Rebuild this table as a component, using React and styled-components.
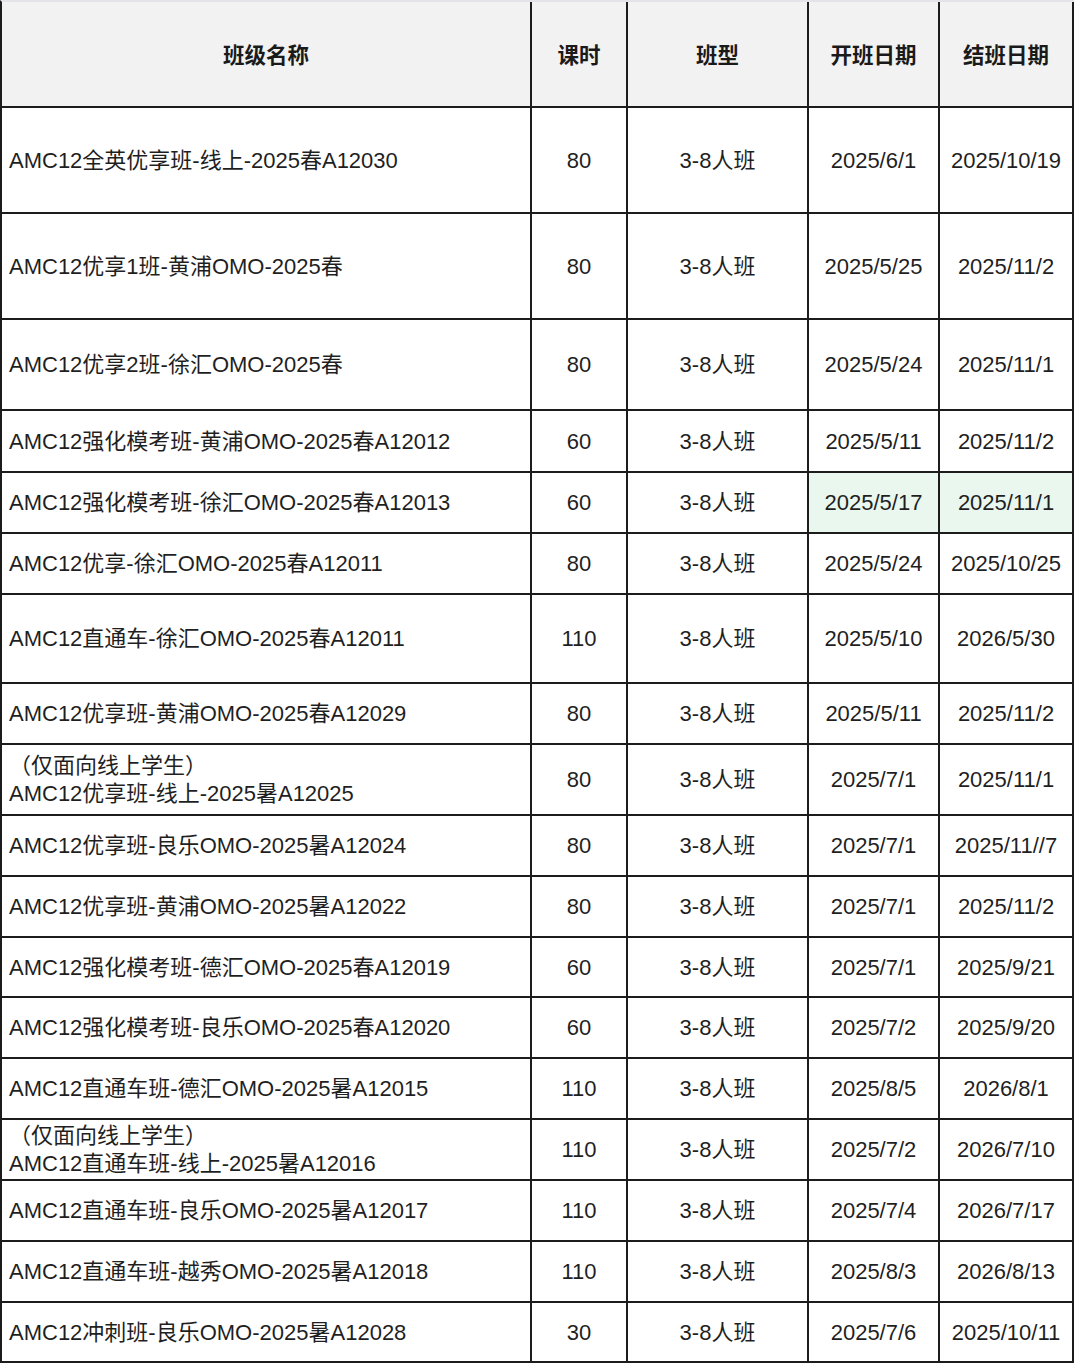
import React from "react";
import styled, { createGlobalStyle, css } from "styled-components";

const Global = createGlobalStyle`
  html, body { margin: 0; padding: 0; background: #ffffff; }
  body {
    font-family: "Liberation Sans", "Noto Sans CJK SC", sans-serif;
    color: #1f1f1f;
  }
`;

const Grid = styled.div`
  display: grid;
  grid-template-columns: 530px 96px 181px 131px 134px;
  width: 1074px;
  box-sizing: border-box;
  border-left: 2px solid #1c1c1c;
  border-top: 2px solid #e4e4e8;
`;

const Cell = styled.div`
  box-sizing: border-box;
  height: ${(p) => p.$h}px;
  border-right: 2px solid #1c1c1c;
  border-bottom: 2px solid #1c1c1c;
  display: flex;
  align-items: center;
  justify-content: ${(p) => (p.$left ? "flex-start" : "center")};
  padding-left: ${(p) => (p.$left ? "7px" : "0")};
  padding-top: 1px;
  font-size: 22px;
  line-height: 28px;
  white-space: pre-line;
  background: ${(p) => (p.$hl ? "#e9f7ee" : "#ffffff")};
  ${(p) =>
    p.$head &&
    css`
      background: #f2f2f2;
      font-weight: 700;
      font-size: 21.5px;
      padding-top: 3px;
      color: #1a1a1a;
    `}
`;

const headers = ["班级名称", "课时", "班型", "开班日期", "结班日期"];

const rows = [
  ["AMC12全英优享班-线上-2025春A12030", "80", "2025/6/1", "2025/10/19", 106],
  ["AMC12优享1班-黄浦OMO-2025春", "80", "2025/5/25", "2025/11/2", 106],
  ["AMC12优享2班-徐汇OMO-2025春", "80", "2025/5/24", "2025/11/1", 91],
  ["AMC12强化模考班-黄浦OMO-2025春A12012", "60", "2025/5/11", "2025/11/2", 62],
  ["AMC12强化模考班-徐汇OMO-2025春A12013", "60", "2025/5/17", "2025/11/1", 61, true],
  ["AMC12优享-徐汇OMO-2025春A12011", "80", "2025/5/24", "2025/10/25", 61],
  ["AMC12直通车-徐汇OMO-2025春A12011", "110", "2025/5/10", "2026/5/30", 89],
  ["AMC12优享班-黄浦OMO-2025春A12029", "80", "2025/5/11", "2025/11/2", 61],
  ["（仅面向线上学生）\nAMC12优享班-线上-2025暑A12025", "80", "2025/7/1", "2025/11/1", 71],
  ["AMC12优享班-良乐OMO-2025暑A12024", "80", "2025/7/1", "2025/11//7", 61],
  ["AMC12优享班-黄浦OMO-2025暑A12022", "80", "2025/7/1", "2025/11/2", 61],
  ["AMC12强化模考班-德汇OMO-2025春A12019", "60", "2025/7/1", "2025/9/21", 60],
  ["AMC12强化模考班-良乐OMO-2025春A12020", "60", "2025/7/2", "2025/9/20", 61],
  ["AMC12直通车班-德汇OMO-2025暑A12015", "110", "2025/8/5", "2026/8/1", 61],
  ["（仅面向线上学生）\nAMC12直通车班-线上-2025暑A12016", "110", "2025/7/2", "2026/7/10", 61],
  ["AMC12直通车班-良乐OMO-2025暑A12017", "110", "2025/7/4", "2026/7/17", 61],
  ["AMC12直通车班-越秀OMO-2025暑A12018", "110", "2025/8/3", "2026/8/13", 61],
  ["AMC12冲刺班-良乐OMO-2025暑A12028", "30", "2025/7/6", "2025/10/11", 60],
];

export default function App() {
  return (
    <>
      <Global />
      <Grid>
        {headers.map((h) => (
          <Cell key={h} $head $h={106}>
            {h}
          </Cell>
        ))}
        {rows.map(([name, hours, start, end, h, hl], i) => (
          <React.Fragment key={i}>
            <Cell $left $h={h}>{name}</Cell>
            <Cell $h={h}>{hours}</Cell>
            <Cell $h={h}>3-8人班</Cell>
            <Cell $h={h} $hl={hl}>{start}</Cell>
            <Cell $h={h} $hl={hl}>{end}</Cell>
          </React.Fragment>
        ))}
      </Grid>
    </>
  );
}
